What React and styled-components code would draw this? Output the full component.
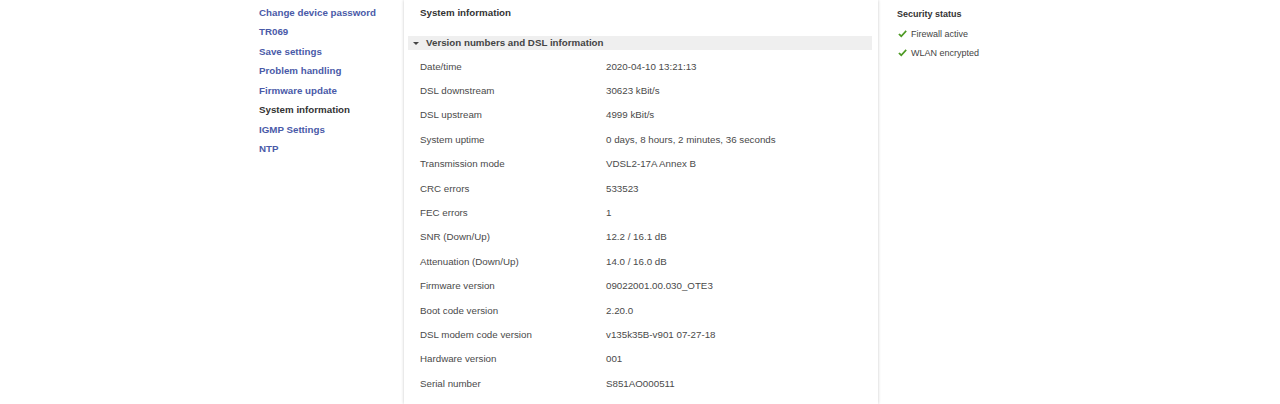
import React from "react";
import styled, { createGlobalStyle } from "styled-components";

const GlobalStyle = createGlobalStyle`
  html, body {
    margin: 0;
    padding: 0;
    background: #fff;
    font-family: "Liberation Sans", Arial, sans-serif;
    color: #444;
  }
`;

const navItems = [
  { label: "Change device password" },
  { label: "TR069" },
  { label: "Save settings" },
  { label: "Problem handling" },
  { label: "Firmware update" },
  { label: "System information", active: true },
  { label: "IGMP Settings" },
  { label: "NTP" },
];

const rows = [
  ["Date/time", "2020-04-10 13:21:13"],
  ["DSL downstream", "30623 kBit/s"],
  ["DSL upstream", "4999 kBit/s"],
  ["System uptime", "0 days, 8 hours, 2 minutes, 36 seconds"],
  ["Transmission mode", "VDSL2-17A Annex B"],
  ["CRC errors", "533523"],
  ["FEC errors", "1"],
  ["SNR (Down/Up)", "12.2 / 16.1 dB"],
  ["Attenuation (Down/Up)", "14.0 / 16.0 dB"],
  ["Firmware version", "09022001.00.030_OTE3"],
  ["Boot code version", "2.20.0"],
  ["DSL modem code version", "v135k35B-v901 07-27-18"],
  ["Hardware version", "001"],
  ["Serial number", "S851AO000511"],
];

const Layout = styled.div`
  display: flex;
  width: 780px;
  height: 404px;
  margin: 0 auto;
  overflow: hidden;
`;

const Nav = styled.ul`
  list-style: none;
  width: 154px;
  flex-shrink: 0;
  margin: 0;
  padding: 2.5px 0 0 9px;
  box-sizing: border-box;
`;

const NavItem = styled.li`
  font-size: 9.75px;
  font-weight: bold;
  line-height: 19.57px;
  color: ${(p) => (p.$active ? "#333" : "#4a5aa8")};
  cursor: pointer;
  white-space: nowrap;
`;

const Main = styled.main`
  width: 474px;
  flex-shrink: 0;
  background: #fff;
  box-shadow: 0 0 3px rgba(0, 0, 0, 0.22);
  padding: 6px 0 0;
  box-sizing: border-box;
`;

const Title = styled.h1`
  margin: 0 0 15.5px;
  padding-left: 16px;
  font-size: 9.75px;
  line-height: 14px;
  font-weight: bold;
  color: #333;
`;

const SectionBar = styled.div`
  display: flex;
  align-items: center;
  gap: 7px;
  height: 14.5px;
  margin: 0 6px 4px 4px;
  padding-left: 5px;
  background: #efefef;
  font-size: 9.75px;
  font-weight: bold;
  color: #444;
`;

const Caret = styled.span`
  width: 0;
  height: 0;
  border-left: 3px solid transparent;
  border-right: 3px solid transparent;
  border-top: 3.5px solid #444;
  margin-top: 1px;
`;

const InfoTable = styled.div`
  display: grid;
  grid-template-columns: 186px 1fr;
  grid-auto-rows: 24.4px;
  padding-left: 16px;
  font-size: 9.75px;
  color: #4a4a4a;
  align-items: center;
`;

const Cell = styled.div`
  white-space: nowrap;
`;

const Side = styled.aside`
  flex: 1;
  padding: 8px 0 0 19px;
`;

const SideTitle = styled.h2`
  margin: 0 0 4px;
  font-size: 9px;
  line-height: 12px;
  font-weight: bold;
  color: #333;
`;

const StatusItem = styled.div`
  display: flex;
  align-items: center;
  gap: 4px;
  height: 19.5px;
  font-size: 9px;
  color: #444;
  padding-left: 1px;
`;

const Check = () => (
  <svg width="9" height="8" viewBox="0 0 9 8">
    <path d="M0.3 4.6 L1.6 3.4 L3.3 5 L7.6 0.3 L8.8 1.4 L3.3 7.6 Z" fill="#4e9a24" />
  </svg>
);

export default function App() {
  return (
    <>
      <GlobalStyle />
      <Layout>
        <Nav>
          {navItems.map((n) => (
            <NavItem key={n.label} $active={n.active}>
              {n.label}
            </NavItem>
          ))}
        </Nav>
        <Main>
          <Title>System information</Title>
          <SectionBar>
            <Caret />
            Version numbers and DSL information
          </SectionBar>
          <InfoTable>
            {rows.map(([k, v]) => (
              <React.Fragment key={k}>
                <Cell>{k}</Cell>
                <Cell>{v}</Cell>
              </React.Fragment>
            ))}
          </InfoTable>
        </Main>
        <Side>
          <SideTitle>Security status</SideTitle>
          <StatusItem>
            <Check />
            Firewall active
          </StatusItem>
          <StatusItem>
            <Check />
            WLAN encrypted
          </StatusItem>
        </Side>
      </Layout>
    </>
  );
}
